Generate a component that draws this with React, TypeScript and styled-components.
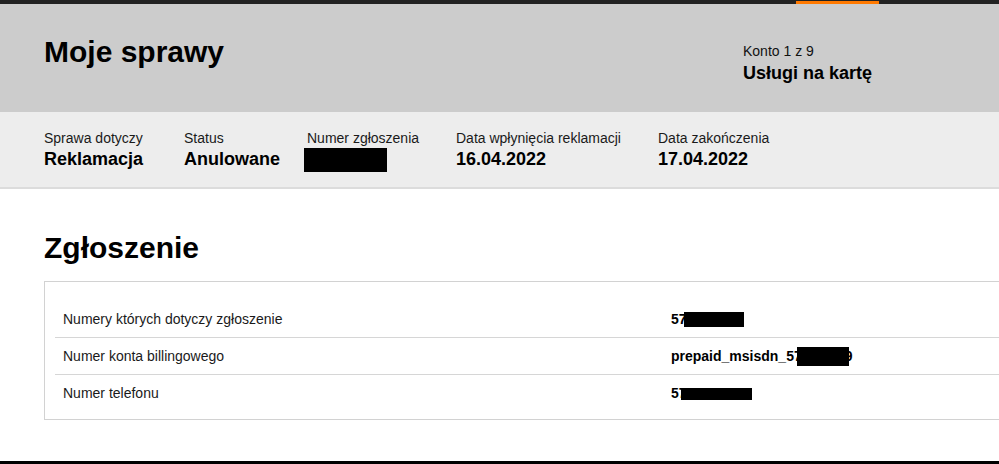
import React from "react";
import styled, { createGlobalStyle } from "styled-components";

const GlobalStyle = createGlobalStyle`
  html, body {
    margin: 0;
    padding: 0;
    overflow: hidden;
    background: #ffffff;
  }
  body {
    font-family: "Liberation Sans", Arial, Helvetica, sans-serif;
    color: #000;
  }
`;

const Page = styled.div`
  width: 100vw;
  height: 100vh;
  overflow: hidden;
  display: flex;
  flex-direction: column;
`;

const TopNav = styled.nav`
  flex: none;
  height: 4px;
  background: #222222;
  position: relative;
`;

const NavIndicator = styled.span`
  position: absolute;
  left: 796px;
  bottom: 0;
  width: 83px;
  height: 3px;
  background: #ff7900;
`;

const Header = styled.header`
  flex: none;
  height: 108px;
  box-sizing: border-box;
  background: #cccccc;
  padding: 33px 0 0 44px;
  display: grid;
  grid-template-columns: 699px auto;
  align-items: start;
`;

const PageTitle = styled.h1`
  margin: 0;
  font-size: 30px;
  line-height: 30px;
  font-weight: 700;
`;

const Account = styled.div`
  display: flex;
  flex-direction: column;
  gap: 4px;
  padding-top: 6px;
`;

const AccountLabel = styled.div`
  font-size: 14px;
  line-height: 16px;
  color: #111;
`;

const AccountName = styled.div`
  font-size: 18px;
  line-height: 20px;
  font-weight: 700;
`;

const InfoBand = styled.section`
  flex: none;
  background: #ededed;
  border-bottom: 2px solid #dcdcdc;
  padding: 18px 0 18px 44px;
  display: grid;
  grid-template-columns: 140px 123px 149px 202px auto;
`;

const InfoItem = styled.div`
  display: flex;
  flex-direction: column;
  gap: 3px;
`;

const InfoLabel = styled.div`
  font-size: 14px;
  line-height: 16px;
  color: #1a1a1a;
`;

const InfoValue = styled.div`
  font-size: 18px;
  line-height: 20px;
  height: 20px;
  font-weight: 700;
  white-space: nowrap;
`;

const Redact = styled.span<{ $w: number; $h: number; $ml?: number; $mt?: number }>`
  display: inline-block;
  width: ${(p) => p.$w}px;
  height: ${(p) => p.$h}px;
  margin-left: ${(p) => p.$ml ?? 0}px;
  margin-top: ${(p) => p.$mt ?? 0}px;
  background: #000;
  vertical-align: middle;
  position: relative;
`;

const BlockRedact = styled(Redact)`
  display: block;
`;

const TrailingChar = styled.span`
  margin-left: -4px;
`;

const Main = styled.main`
  flex: 1;
  overflow: hidden;
  padding: 44px 0 0 44px;
`;

const SectionTitle = styled.h2`
  margin: 0 0 18px;
  font-size: 30px;
  line-height: 30px;
  font-weight: 700;
`;

const DetailsBox = styled.div`
  border: 1px solid #d2d2d2;
  padding: 19px 0 8px 10px;
  width: 1200px;
`;

const DetailRow = styled.div<{ $first?: boolean }>`
  display: grid;
  grid-template-columns: 608px auto;
  align-items: center;
  height: 36px;
  padding-left: 8px;
  border-top: ${(p) => (p.$first ? "none" : "1px solid #d6d6d6")};
`;

const RowLabel = styled.div`
  font-size: 14px;
  color: #1a1a1a;
`;

const RowValue = styled.div`
  font-size: 14px;
  font-weight: 700;
  white-space: nowrap;
  display: flex;
  align-items: center;
`;

const Footer = styled.footer`
  flex: none;
  height: 3px;
  background: #000;
`;

export default function App() {
  return (
    <>
      <GlobalStyle />
      <Page>
        <TopNav>
          <NavIndicator />
        </TopNav>
        <Header>
          <PageTitle>Moje sprawy</PageTitle>
          <Account>
            <AccountLabel>Konto 1 z 9</AccountLabel>
            <AccountName>Usługi na kartę</AccountName>
          </Account>
        </Header>
        <InfoBand>
          <InfoItem>
            <InfoLabel>Sprawa dotyczy</InfoLabel>
            <InfoValue>Reklamacja</InfoValue>
          </InfoItem>
          <InfoItem>
            <InfoLabel>Status</InfoLabel>
            <InfoValue>Anulowane</InfoValue>
          </InfoItem>
          <InfoItem>
            <InfoLabel>Numer zgłoszenia</InfoLabel>
            <InfoValue>
              <BlockRedact $w={83} $h={24} $ml={-3} $mt={-1} />
            </InfoValue>
          </InfoItem>
          <InfoItem>
            <InfoLabel>Data wpłynięcia reklamacji</InfoLabel>
            <InfoValue>16.04.2022</InfoValue>
          </InfoItem>
          <InfoItem>
            <InfoLabel>Data zakończenia</InfoLabel>
            <InfoValue>17.04.2022</InfoValue>
          </InfoItem>
        </InfoBand>
        <Main>
          <SectionTitle>Zgłoszenie</SectionTitle>
          <DetailsBox>
            <DetailRow $first>
              <RowLabel>Numery których dotyczy zgłoszenie</RowLabel>
              <RowValue>
                57
                <Redact $w={60} $h={15} $ml={-3} />
              </RowValue>
            </DetailRow>
            <DetailRow>
              <RowLabel>Numer konta billingowego</RowLabel>
              <RowValue>
                prepaid_msisdn_57
                <Redact $w={52} $h={19} $ml={-5} />
                <TrailingChar>9</TrailingChar>
              </RowValue>
            </DetailRow>
            <DetailRow>
              <RowLabel>Numer telefonu</RowLabel>
              <RowValue>
                57
                <Redact $w={71} $h={12} $ml={-6} $mt={1} />
              </RowValue>
            </DetailRow>
          </DetailsBox>
        </Main>
        <Footer />
      </Page>
    </>
  );
}
